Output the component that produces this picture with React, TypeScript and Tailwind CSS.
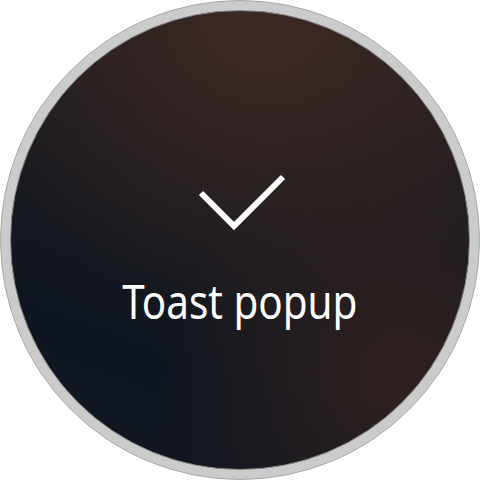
export default function App() {
  return (
    <div className="w-[480px] h-[480px] bg-white flex items-center justify-center">
      {/* bezel */}
      <div className="w-[480px] h-[480px] rounded-full bg-[#cbcbcb] border border-[#a8a8a8] flex items-center justify-center">
        {/* screen */}
        <div className="w-[460px] h-[460px] rounded-full border border-[#8a8a8a] overflow-hidden bg-[radial-gradient(circle_at_85%_80%,#30211f_0%,rgba(48,33,31,0)_45%),radial-gradient(circle_at_55%_0%,#3d2924_0%,rgba(61,41,36,0)_60%),linear-gradient(200deg,#2a2222_0%,#1a1a1f_45%,#0f1620_75%,#141820_100%)] flex flex-col items-center">
          <svg width="100" height="70" viewBox="0 0 100 70" className="mt-[161px]" fill="none">
            <path d="M11 21 L44 54 L93 5" stroke="#ffffff" strokeWidth="6" strokeLinecap="butt" strokeLinejoin="miter" />
          </svg>
          <div
            className="mt-[36px] text-white text-[47px] leading-none scale-x-[0.86] whitespace-nowrap"
            style={{ fontFamily: '"Noto Sans", "Open Sans", sans-serif' }}
          >
            Toast popup
          </div>
        </div>
      </div>
    </div>
  );
}
